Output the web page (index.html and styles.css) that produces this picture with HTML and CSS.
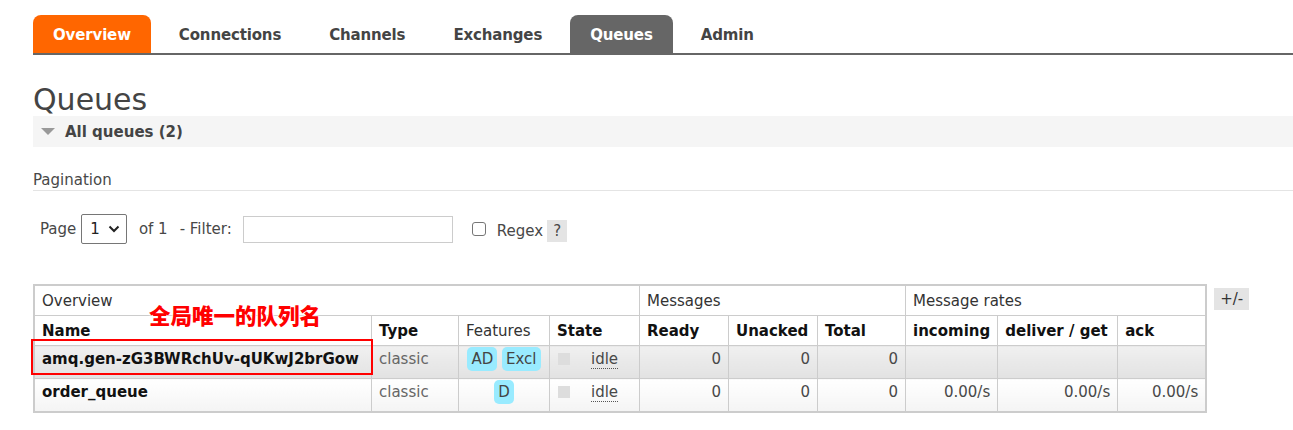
FILE: index.html
```html
<!DOCTYPE html>
<html lang="en">
<head>
    <meta charset="UTF-8">
    <title>RabbitMQ Management - Queues</title>
    <link rel="stylesheet" href="styles.css">
</head>
<body>
    <div class="page">
        <ul class="menu">
            <li class="tab tab-overview">Overview</li>
            <li class="tab">Connections</li>
            <li class="tab">Channels</li>
            <li class="tab">Exchanges</li>
            <li class="tab tab-active">Queues</li>
            <li class="tab">Admin</li>
        </ul>

        <h1>Queues</h1>

        <div class="section-head">
            <span class="arrow"></span>
            <span>All queues (2)</span>
        </div>

        <div class="pagination-title">Pagination</div>

        <div class="filter-row">
            <span>Page</span>
            <span class="page-select">1 <svg width="12" height="8" viewBox="0 0 12 8"><path d="M1.5 1.5 L6 6 L10.5 1.5" fill="none" stroke="#222" stroke-width="2"/></svg></span>
            <span class="of">of 1</span>
            <span>- Filter:</span>
            <span class="filter-input"></span>
            <span class="checkbox"></span>
            <span class="regex">Regex</span>
            <span class="help">?</span>
        </div>

        <div class="table-wrap">
            <table class="list">
                <thead>
                    <tr class="group">
                        <th colspan="4">Overview</th>
                        <th colspan="3">Messages</th>
                        <th colspan="3">Message rates</th>
                    </tr>
                    <tr class="cols">
                        <th class="c-name">Name</th>
                        <th class="c-type">Type</th>
                        <th class="c-feat light">Features</th>
                        <th class="c-state">State</th>
                        <th class="c-ready">Ready</th>
                        <th class="c-unack">Unacked</th>
                        <th class="c-total">Total</th>
                        <th class="c-in">incoming</th>
                        <th class="c-deliv">deliver / get</th>
                        <th class="c-ack">ack</th>
                    </tr>
                </thead>
                <tbody>
                    <tr class="alt1">
                        <td class="name">amq.gen-zG3BWRchUv-qUKwJ2brGow</td>
                        <td class="muted">classic</td>
                        <td class="center"><span class="badge">AD</span> <span class="badge">Excl</span></td>
                        <td><span class="state-box"></span><span class="idle">idle</span></td>
                        <td class="num">0</td>
                        <td class="num">0</td>
                        <td class="num">0</td>
                        <td></td>
                        <td></td>
                        <td></td>
                    </tr>
                    <tr class="alt2">
                        <td class="name">order_queue</td>
                        <td class="muted">classic</td>
                        <td class="center"><span class="badge">D</span></td>
                        <td><span class="state-box"></span><span class="idle">idle</span></td>
                        <td class="num">0</td>
                        <td class="num">0</td>
                        <td class="num">0</td>
                        <td class="num">0.00/s</td>
                        <td class="num">0.00/s</td>
                        <td class="num">0.00/s</td>
                    </tr>
                </tbody>
            </table>
            <span class="plus-minus">+/-</span>

            <div class="note">全局唯一的队列名</div>
            <div class="note-box"></div>
        </div>
    </div>
</body>
</html>
```

FILE: styles.css
```css
body {
    margin: 0;
    font-family: "DejaVu Sans", Verdana, sans-serif;
    font-size: 15px;
    color: #484848;
    background: #ffffff;
}

.page {
    padding: 15px 0 0 33px;
}

/* top menu */
.menu {
    display: flex;
    gap: 8px;
    list-style: none;
    margin: 0;
    padding: 0;
    border-bottom: 2px solid #666666;
    height: 38px;
}

.tab {
    padding: 1px 20px 0;
    line-height: 38px;
    font-size: 15px;
    font-weight: bold;
    color: #444444;
    border-radius: 8px 8px 0 0;
    letter-spacing: -0.15px;
}

.tab-overview {
    background: #ff6600;
    color: #ffffff;
}

.tab-active {
    background: #666666;
    color: #ffffff;
}

h1 {
    margin: 28px 0 0 0;
    font-size: 30px;
    font-weight: normal;
    line-height: 33px;
    color: #444444;
}

.section-head {
    display: flex;
    align-items: center;
    height: 31px;
    background: #f5f5f5;
    font-size: 15px;
    font-weight: bold;
    color: #444444;
}

.arrow {
    width: 0;
    height: 0;
    margin: 0 10px 0 8px;
    border-left: 7px solid transparent;
    border-right: 7px solid transparent;
    border-top: 7px solid #999999;
}

.pagination-title {
    margin-top: 24px;
    border-bottom: 1px solid #e4e4e4;
    line-height: 19px;
}

.filter-row {
    display: flex;
    align-items: center;
    height: 30px;
    margin: 23px 0 0 7px;
}

.page-select {
    display: flex;
    align-items: center;
    gap: 8px;
    height: 28px;
    margin: 0 12px 0 5px;
    padding: 0 6px 0 8px;
    border: 1px solid #767676;
    border-radius: 2px;
    color: #222222;
    font-size: 15px;
}

.of {
    margin-right: 12px;
}

.filter-input {
    width: 208px;
    height: 25px;
    margin-left: 11px;
    border: 1px solid #cccccc;
}

.checkbox {
    width: 12px;
    height: 12px;
    margin: 0 11px 0 19px;
    border: 1px solid #767676;
    border-radius: 3px;
}

.regex {
    margin-top: 4px;
}

.help {
    margin: 4px 0 0 4px;
    padding: 0 6px;
    line-height: 22px;
    background: #e4e4e4;
}

/* queue table */
.table-wrap {
    position: relative;
    display: flex;
    align-items: flex-start;
    gap: 7px;
    margin-top: 40px;
}

table.list {
    border-collapse: collapse;
    border: 2px solid #cccccc;
}

table.list th,
table.list td {
    border: 1px solid #cccccc;
    padding: 0 7px;
    text-align: left;
    white-space: nowrap;
}

table.list th {
    height: 29px;
    color: #111111;
}

tr.group th {
    font-weight: normal;
    font-size: 15px;
    color: #333333;
}

tr.cols th {
    font-size: 15px;
}

tr.cols th.light {
    font-weight: normal;
    color: #333333;
}

table.list td {
    height: 31px;
    padding-top: 1px;
    vertical-align: top;
    line-height: 24px;
}

tr.alt1 td {
    background: linear-gradient(#f0f0f0, #e2e2e2);
}

tr.alt2 td {
    background: linear-gradient(#ffffff, #f4f4f4);
}

.c-name { width: 322px; }
.c-type { width: 72px; }
.c-feat { width: 76px; }
.c-state { width: 75px; }
.c-ready { width: 74px; }
.c-unack { width: 74px; }
.c-total { width: 73px; }
.c-in { width: 76px; }
.c-deliv { width: 105px; }
.c-ack { width: 73px; }

table.list td.name {
    font-weight: bold;
    color: #111111;
}

table.list td.muted {
    color: #666666;
}

table.list td.center {
    text-align: center;
}

table.list td.num {
    text-align: right;
    padding-right: 7px;
}

.badge {
    display: inline-block;
    padding: 0 4px;
    line-height: 24px;
    border-radius: 5px;
    background: #99ebff;
    color: #444444;
}

.state-box {
    display: inline-block;
    width: 12px;
    height: 12px;
    margin: 0 21px 0 1px;
    vertical-align: -1px;
    background: #dddddd;
}

.idle {
    border-bottom: 1px dotted #555555;
}

.plus-minus {
    margin-top: 4px;
    padding: 0 6px;
    line-height: 22px;
    background: #e4e4e4;
    color: #333333;
}

/* annotations on top of the screenshot */
.note {
    position: absolute;
    left: 116px;
    top: 17px;
    font-family: "Noto Sans CJK SC", sans-serif;
    font-size: 21.5px;
    line-height: 28px;
    font-weight: 900;
    color: #ff0000;
    text-shadow: 0 0 2px #ffffff, 0 0 2px #ffffff, 0 0 3px #ffffff;
}

.note-box {
    position: absolute;
    left: -2px;
    top: 55px;
    width: 338px;
    height: 32px;
    border: 2px solid #ff0000;
}
```
